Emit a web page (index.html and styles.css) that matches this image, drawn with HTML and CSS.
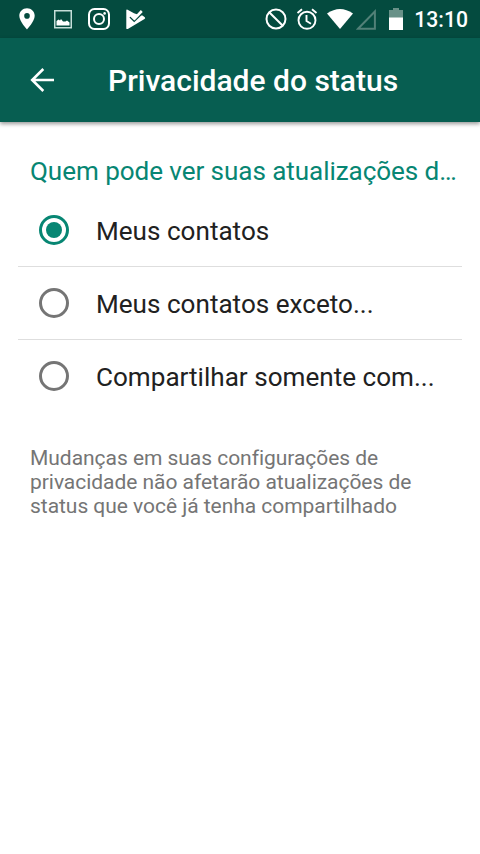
FILE: index.html
```html
<!DOCTYPE html>
<html lang="pt-BR">
<head>
<meta charset="utf-8">
<title>Privacidade do status</title>
<link rel="stylesheet" href="styles.css">
</head>
<body>
<div class="statusbar">
  <div class="notifications">
    <svg width="16" height="22" viewBox="0 0 16 22"><path fill="#fff" fill-rule="evenodd" d="M8 .3C3.700.3.3 3.600.3 7.800.3 13.500 8 21.500 8 21.500s7.700-8 7.700-13.700C15.700 3.600 12.300.3 8 .3zM8 5.100a2.800 2.800 0 1 1 0 5.600 2.800 2.800 0 0 1 0-5.600z"/></svg>
    <svg width="18" height="19" viewBox="0 0 18 19"><rect x=".75" y=".75" width="16.500" height="17" fill="none" stroke="#c5ded9" stroke-width="1.500"/><path fill="#fff" d="M2.500 15.500V11l2-1.500 1.500 1 1-1.500 2 2.500 2.500 0 1.500-1 2.500 2v3z"/></svg>
    <svg width="22" height="22" viewBox="0 0 22 22" fill="none" stroke="#fff"><rect x="1" y="1" width="20" height="20" rx="5.500" stroke-width="2"/><circle cx="11" cy="11" r="5" stroke-width="2"/><circle cx="16.600" cy="5.400" r="1.300" fill="#fff" stroke="none"/></svg>
    <svg width="20" height="21" viewBox="0 0 20 21"><path fill="#fff" d="M.3 1.500Q.3.200 1.600.8L8 4.300 13 6 16.500 6.500 18.800 8.200Q19.700 9.200 18.500 10.100L1.800 19.900Q.3 20.500.3 19.200z"/><path d="M4 8 8.200 12.200 17 3.600" fill="none" stroke="#044b3f" stroke-width="1.600"/><path d="M5 6.300 8.500 9.600 15.800 2" fill="none" stroke="#fff" stroke-width="2.600"/></svg>
  </div>
  <div class="system">
    <svg width="22" height="22" viewBox="0 0 22 22" fill="none" stroke="#fff" stroke-width="2"><circle cx="11" cy="11" r="9.500"/><path d="m4.200 4.200 13.600 13.600"/></svg>
    <svg width="22" height="22" viewBox="0 0 22 22" fill="none" stroke="#fff" stroke-width="1.900"><circle cx="11" cy="12.300" r="8.500"/><path d="M10.500 7v6l4.500 2.700M1.500 5 6 1.300M16 1.300 20.500 5"/></svg>
    <svg width="26" height="20" viewBox="0 0 26 20"><path fill="#fff" d="M0 4.500Q13-4.500 26 4.500L13 20z"/></svg>
    <svg width="20" height="21" viewBox="0 0 20 21"><path d="M2 19.800 18.900 2.500v17.300z" fill="none" stroke="#528178" stroke-width="2"/></svg>
    <svg width="14" height="22" viewBox="0 0 14 22"><path fill="#689188" d="M4 0h6v2h4v8H0V2h4z"/><path fill="#fff" d="M0 9.500h14V22H0z"/></svg>
    <time class="clock">13:10</time>
  </div>
</div>
<header class="appbar">
  <svg class="back" width="24" height="24" viewBox="0 0 24 24" fill="none" stroke="#fff" stroke-width="2.600"><path d="M24 12H2M13.300 1 2.200 12l11.100 11"/></svg>
  <h1 class="title">Privacidade do status</h1>
</header>
<main class="content">
  <h2 class="heading">Quem pode ver suas atualizações d…</h2>
  <ul class="options">
    <li class="option"><span class="radio checked"></span><span class="label">Meus contatos</span></li>
    <li class="option"><span class="radio"></span><span class="label">Meus contatos exceto...</span></li>
    <li class="option"><span class="radio"></span><span class="label">Compartilhar somente com...</span></li>
  </ul>
  <p class="note">Mudanças em suas configurações de privacidade não afetarão atualizações de status que você já tenha compartilhado</p>
</main>
</body>
</html>
```
FILE: styles.css
```css
* { box-sizing: border-box; }
body { margin: 0; height: 854px; overflow: hidden; background: #fff; font-family: Roboto, sans-serif; }
svg { display: block; flex: none; }
.statusbar { height: 38px; display: flex; justify-content: space-between; align-items: center; padding: 0 12px 0 19px; background: #044b3f; }
.notifications { display: flex; align-items: center; gap: 16px; }
.notifications svg:nth-child(2) { margin-left: 3px; }
.system { display: flex; align-items: center; }
.system svg:nth-child(2) { margin-left: 9px; }
.system svg:nth-child(3) { margin-left: 9px; }
.system svg:nth-child(4) { margin-left: 3px; }
.system svg:nth-child(5) { margin-left: 13px; }
.clock { margin-left: 11px; padding-top: 2px; color: #fff; font-size: 21.2px; font-weight: 500; line-height: 36px; }
.appbar { height: 84px; display: flex; align-items: center; padding-left: 30px; background: #075e51; box-shadow: 0 2px 4px rgba(0, 0, 0, .4); }
.title { margin: 0 0 0 54px; padding-top: 2px; color: #fff; font-size: 30px; font-weight: 500; line-height: 36px; white-space: nowrap; }
.content { padding: 33px 18px 0; }
.heading { margin: 0 4px 0 12px; color: #078673; font-size: 26.1px; font-weight: 400; line-height: 32px; letter-spacing: -.08px; white-space: nowrap; }
.options { list-style: none; margin: 7px 0 0; padding: 0; }
.option { height: 73px; display: flex; align-items: center; padding-left: 21px; border-bottom: 1px solid #dedede; }
.option:last-child { border-bottom-color: transparent; }
.radio { width: 30px; height: 30px; flex: none; display: flex; align-items: center; justify-content: center; border: 3px solid #757575; border-radius: 50%; }
.checked { border-color: #078673; }
.checked::after { content: ""; width: 16px; height: 16px; border-radius: 50%; background: #078673; }
.label { margin-left: 27px; padding-top: 2px; color: #212121; font-size: 26.1px; line-height: 32px; white-space: nowrap; }
.note { margin: 33px 12px 0; color: #757575; font-size: 21px; line-height: 24px; letter-spacing: -.04px; }
```
